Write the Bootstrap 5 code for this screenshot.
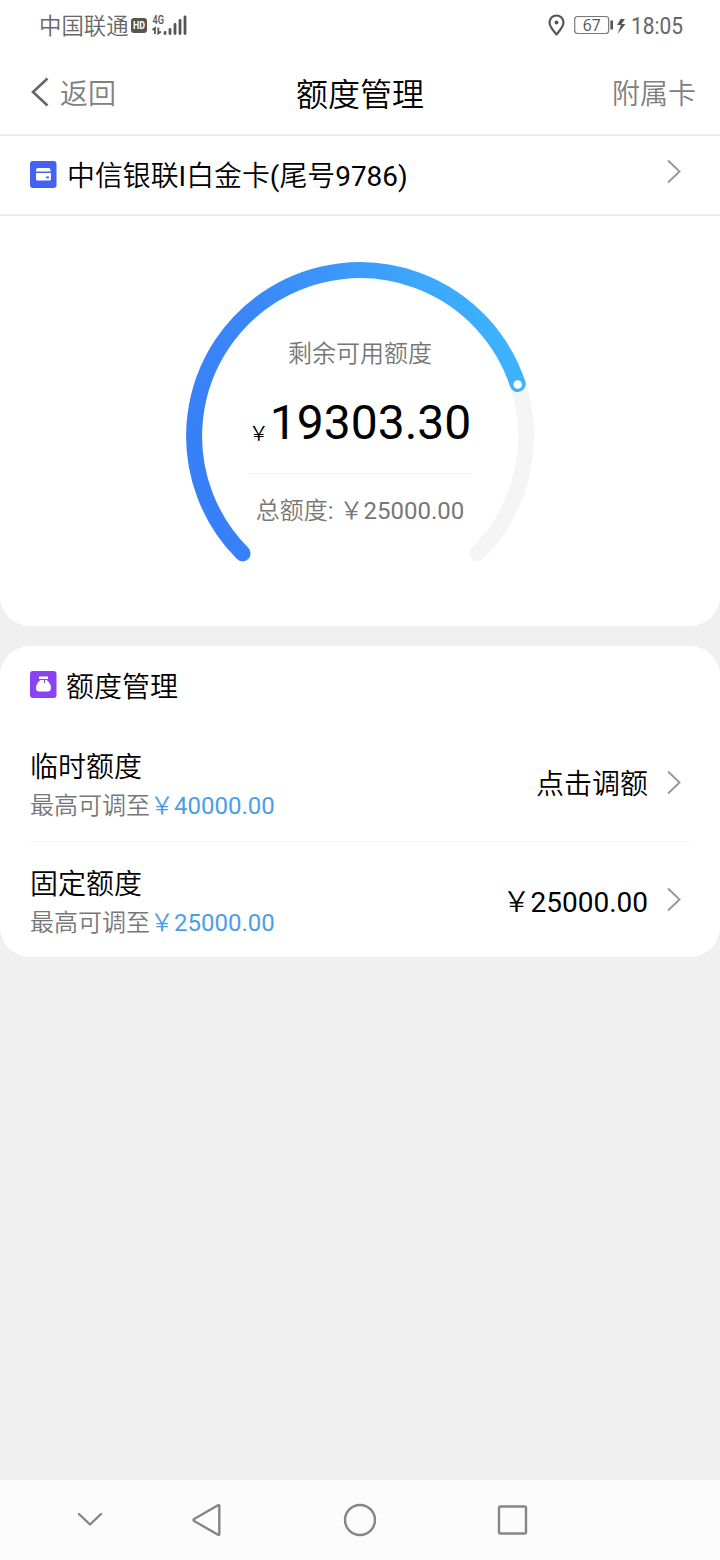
<!DOCTYPE html>
<html lang="zh-CN">
<head>
<meta charset="utf-8">
<meta name="viewport" content="width=device-width, initial-scale=1">
<title>额度管理</title>
<link href="https://cdn.jsdelivr.net/npm/bootstrap@5.3.0/dist/css/bootstrap.min.css" rel="stylesheet">
<style>
body{font-family:Roboto,"Noto Sans CJK SC",sans-serif;background:#f0f0f0;color:#000;height:1560px;font-size:28px;line-height:40px;overflow:hidden}
svg{display:block;flex:none}
.status{height:50px;padding:2px 37px 0 39px;color:#666;font-size:22.4px}
.clock{font-size:23.5px;width:52px;white-space:nowrap}
.clock span{display:inline-block;transform:scaleX(.89);transform-origin:left}
.topbar{height:86px;border-bottom:2px solid #ececec;padding:2px 24px 0 30px}
.topbar>*{flex:1 1 0}
.topbar span,.topbar .page-title,.topbar .text-end{padding-top:4px}
.topbar .page-title{font-size:32px;padding-right:6px}
.soft{color:#808080}
.card-line{height:80px;border-bottom:2px solid #ececec;padding:0 38px 0 30px}
.card-line>span{padding-top:4px;font-size:27.9px}
.gauge-panel{height:410px;border-radius:0 0 30px 30px}
.gauge{width:348px;height:320px;margin-top:46px}
.gauge-text{inset:0;padding-top:72px}
.gauge-label{font-size:24px;color:#777}
.remain{font-size:48px;line-height:56px;margin-top:21px}
.remain small{font-size:20px;margin-right:1px;position:relative;top:2px}
.rule{width:222px;height:1px;background:#f0f0f0;margin-top:13px}
.total{margin-top:17px}
.limits{margin-top:20px;height:311px;border-radius:30px;padding:0 30px}
.limits-head{height:78px}
.limits-head span{padding-top:5px}
.limit-row{height:117px}
.limit-row>div{padding-top:6px}
.limit-row>span{padding-top:5px}
.limit-row>svg{margin-top:2px}
.limit-row+.limit-row{border-top:1px solid #f5f5f5}
.limit-row .sub{font-size:24px;line-height:36px;color:#777}
.limit-row .sub b{font-weight:400;color:#4a9ee8}
.softkeys{height:80px;background:#fcfcfc}
.thin{font-weight:350}
</style>
</head>
<body class="d-flex flex-column">
<div class="bg-white">
  <div class="status d-flex align-items-center justify-content-between">
    <div class="d-flex align-items-center">
      <span class="thin">中国联通</span>
      <svg width="60" height="26" viewBox="0 0 60 26" fill="#555">
        <rect x="2" y="5" width="16" height="15" rx="3"/>
        <text x="10" y="16.2" font-size="10" font-weight="700" fill="#fff" text-anchor="middle" textLength="12" lengthAdjust="spacingAndGlyphs">HD</text>
        <text x="23.500" y="10.500" font-size="12" font-weight="500" textLength="11.500" lengthAdjust="spacingAndGlyphs">4G</text>
        <path d="M23.500 17l2.500-2v6M31.800 18.500l-2.500 2v-6" fill="none" stroke="#555" stroke-width="1.800"/>
        <path d="M36 20.500v-1M41 20.500v-4M46 20.500v-9M51 20.500v-13M56 20.500v-16.500" stroke="#555" stroke-width="2.800" stroke-linecap="round"/>
      </svg>
    </div>
    <div class="d-flex align-items-center">
      <svg width="84" height="26" viewBox="0 0 84 26" fill="none" stroke="#555">
        <path d="M9.500 21.500C6 17.500 2.500 13.500 2.500 9.500a7 7 0 0 1 14 0c0 4-3.500 8-7 12z" stroke-width="2.200" stroke-linejoin="round"/>
        <circle cx="9.500" cy="9.500" r="2" fill="#555" stroke="none"/>
        <rect x="27.700" y="3.500" width="34" height="17" rx="3" stroke="#777" stroke-width="1.200"/>
        <text x="44.800" y="17.500" font-size="16" text-anchor="middle" fill="#555" stroke="none" textLength="18" lengthAdjust="spacingAndGlyphs" font-family="Open Sans">67</text>
        <path d="M64.700 7.500v9" stroke-width="2.600"/>
        <path d="M75.500 3l-5.500 9h4l-3.500 9 8-10h-4l3.500-5h-4z" fill="#555" stroke="none"/>
      </svg>
      <div class="clock"><span>18:05</span></div>
    </div>
  </div>
  <nav class="topbar d-flex align-items-center soft">
    <div class="d-flex align-items-center">
      <svg width="30" height="32" viewBox="0 0 30 32" fill="none" stroke="#666" stroke-width="2.600"><path d="M17.500 1.500L3 15l14.500 13.500"/></svg>
      <span class="thin">返回</span>
    </div>
    <div class="page-title text-center text-black thin">额度管理</div>
    <div class="text-end thin">附属卡</div>
  </nav>
  <div class="card-line d-flex align-items-center">
    <svg width="37" height="28" viewBox="0 0 37 28">
      <rect y="0" width="26.500" height="27" rx="3" fill="#4361f5"/>
      <path d="M6 10.500v-1.500q0-2 2-2h10.500q2 0 2 2v1.500zM6 12h15v6q0 1.500-1.500 1.500h-12q-1.500 0-1.500-1.500z" fill="#fff"/>
      <rect x="16" y="15.500" width="3" height="1.800" fill="#4361f5"/>
    </svg>
    <span class="flex-grow-1"><span class="thin">中信银联</span>I<span class="thin">白金卡</span>(<span class="thin">尾号</span>9786)</span>
    <svg width="16" height="32" viewBox="0 0 16 32" fill="none" stroke="#999" stroke-width="2"><path d="M2 1.500L13.500 12.500 2 23.500"/></svg>
  </div>
</div>
<section class="gauge-panel bg-white">
  <div class="gauge position-relative mx-auto">
    <svg width="348" height="320" viewBox="0 0 348 320" fill="none" stroke-width="16" stroke-linecap="round">
      <defs><linearGradient id="sweep" gradientUnits="userSpaceOnUse" x1="20" y1="200" x2="332" y2="100"><stop offset="0" stop-color="#3880f8"/><stop offset=".3" stop-color="#3b88f8"/><stop offset="1" stop-color="#3db3ff"/></linearGradient></defs>
      <path d="M291.400 291.400A166 166 0 0 0 331.700 122" stroke="#f5f5f5"/>
      <path d="M56.600 291.400A166 166 0 1 1 331.700 122" stroke="url(#sweep)"/>
      <circle cx="331.700" cy="122.500" r="4.300" fill="#fff"/>
    </svg>
    <div class="gauge-text position-absolute d-flex flex-column align-items-center">
      <div class="gauge-label thin">剩余可用额度</div>
      <div class="remain"><small class="thin">￥</small>19303.30</div>
      <div class="rule"></div>
      <div class="gauge-label total"><span class="thin">总额度</span>: <span class="thin">￥</span>25000.00</div>
    </div>
  </div>
</section>
<section class="limits bg-white">
  <div class="limits-head d-flex align-items-center">
    <svg width="36" height="30" viewBox="0 0 36 30">
      <rect y="1" width="26.500" height="27" rx="3" fill="#8a42f5"/>
      <path d="M9 6.500h9v2.500H9zM10.500 10h3.500v3h1v-3h1.500q4.500 3.500 4.500 7.500 0 4-3.500 4h-8.500q-3 0-3-3.500 0-4.500 4.500-8z" fill="#fff"/>
    </svg>
    <span class="thin">额度管理</span>
  </div>
  <div class="limit-row d-flex align-items-center">
    <div class="flex-grow-1"><div class="thin">临时额度</div><div class="sub"><span class="thin">最高可调至</span><b><span class="thin">￥</span>40000.00</b></div></div>
    <span class="thin">点击调额</span>
    <svg class="ms-3 me-2" width="18" height="30" viewBox="0 0 18 30" fill="none" stroke="#999" stroke-width="2"><path d="M4 2.500L15.500 13.500 4 24.500"/></svg>
  </div>
  <div class="limit-row d-flex align-items-center">
    <div class="flex-grow-1"><div class="thin">固定额度</div><div class="sub"><span class="thin">最高可调至</span><b><span class="thin">￥</span>25000.00</b></div></div>
    <span><span class="thin">￥</span>25000.00</span>
    <svg class="ms-3 me-2" width="18" height="30" viewBox="0 0 18 30" fill="none" stroke="#999" stroke-width="2"><path d="M4 2.500L15.500 13.500 4 24.500"/></svg>
  </div>
</section>
<footer class="softkeys mt-auto">
  <svg width="720" height="80" viewBox="0 0 720 80" fill="none" stroke="#858585" stroke-width="2.400" stroke-linejoin="round" stroke-linecap="round">
    <path d="M79 34l11 10.500L101 34"/>
    <path d="M194.500 38.800l23.500-13.500q1.300-.5 1.300 1v27.400q0 1.500-1.300 1l-23.500-13.500q-2-1.200 0-2.400z"/>
    <circle cx="360" cy="40" r="15"/>
    <rect x="499" y="26.500" width="27" height="27" rx="1.500"/>
  </svg>
</footer>
<script src="https://cdn.jsdelivr.net/npm/bootstrap@5.3.0/dist/js/bootstrap.bundle.min.js"></script>
</body>
</html>
